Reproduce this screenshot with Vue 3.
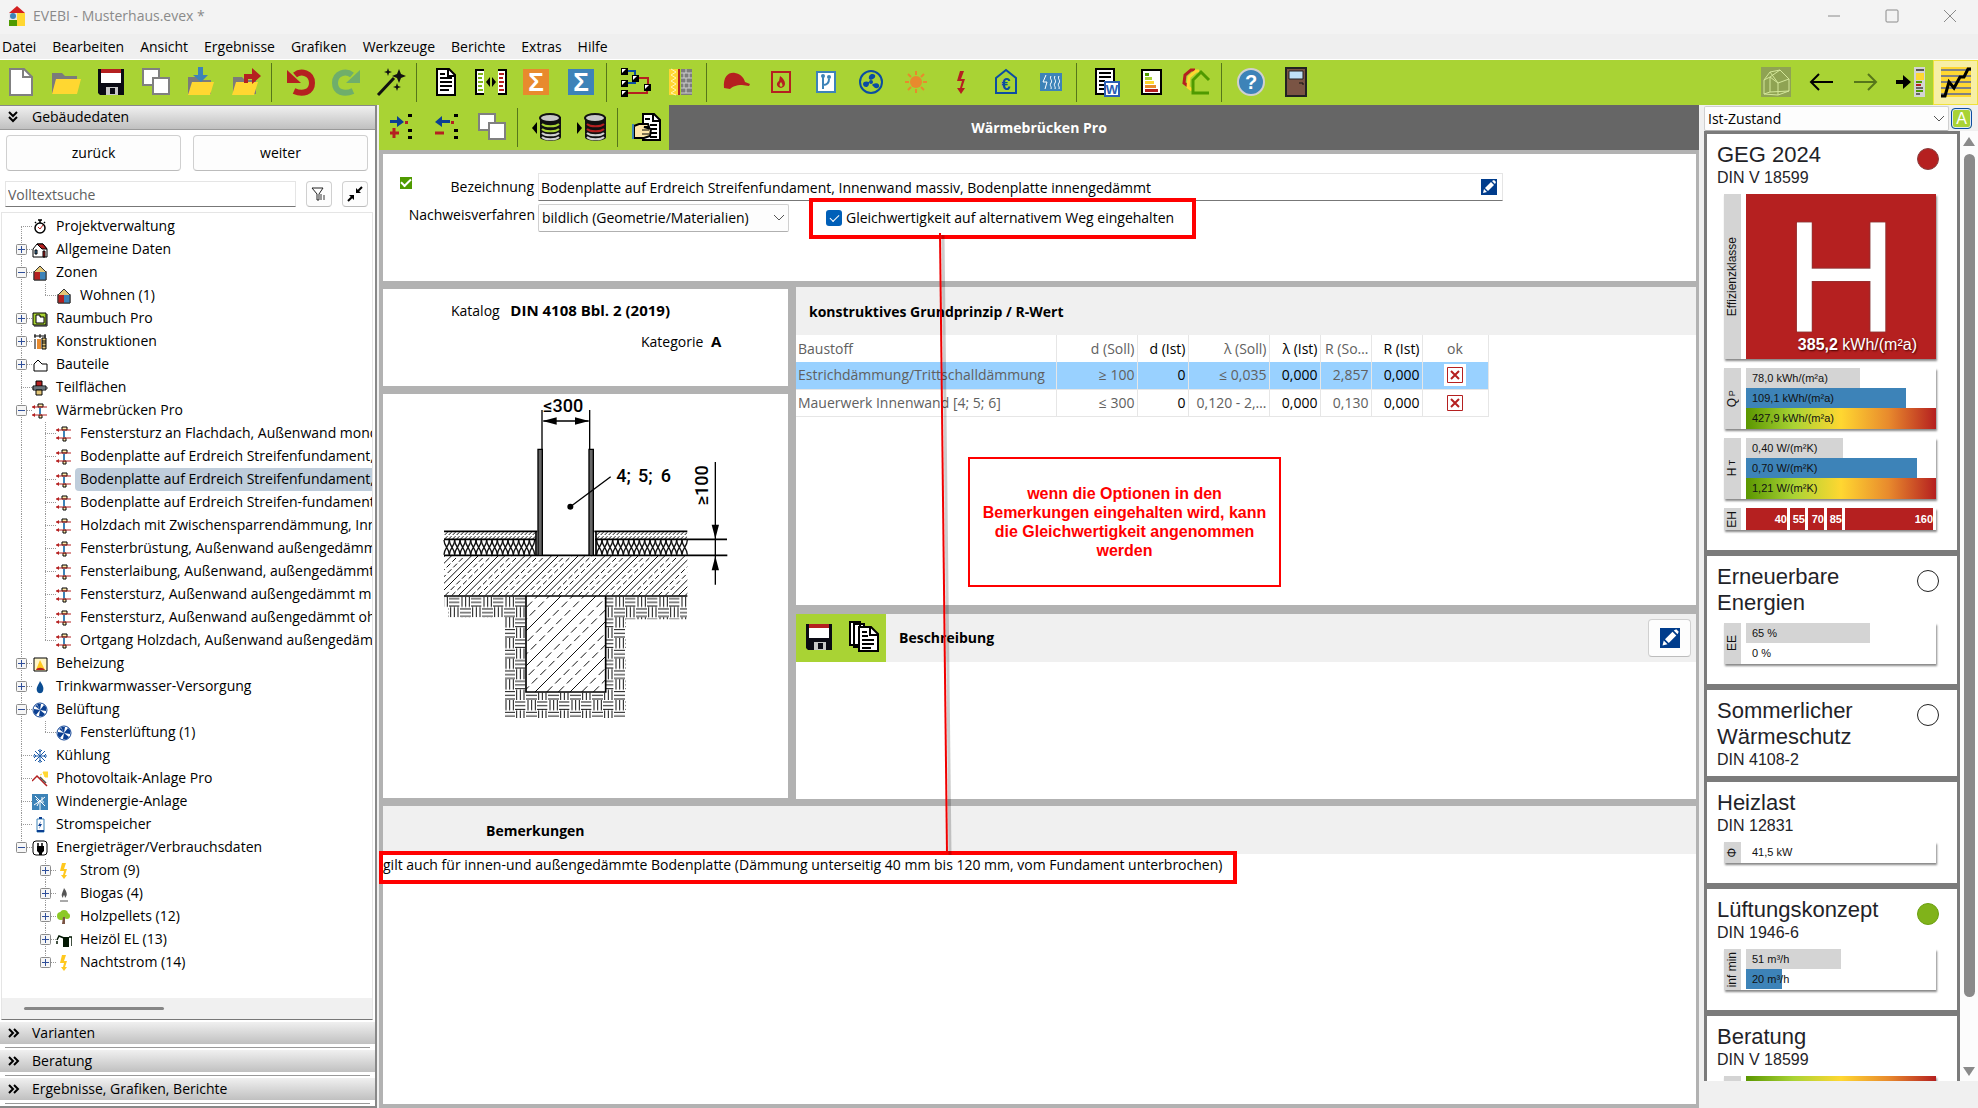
<script setup>
import { ref } from 'vue'

const menus = ['Datei', 'Bearbeiten', 'Ansicht', 'Ergebnisse', 'Grafiken', 'Werkzeuge', 'Berichte', 'Extras', 'Hilfe']

// 32 x 32 toolbar symbols
const icons = {
  neu: '<path d="M5 3h14l8 8v18H5z" fill="#fff" stroke="#808080" stroke-width="2"/><path d="M18 3v8h8" fill="none" stroke="#808080" stroke-width="2"/>',
  oeffnen: '<path d="M2 7h10l3 3h12v18H2z" fill="#7b7b7b"/><path d="M6 13h25l-4 15H2z" fill="#ffd731"/>',
  speichern: '<path d="M3 3h26v26H5l-2-2z" fill="#0a0a14"/><path d="M6 3h20v4H6z" fill="#b52020"/><path d="M6 7h20v10H6z" fill="#fff"/><path d="M11 21h12v8H11z" fill="#c8c8c8"/><path d="M15 22h5v6h-5z" fill="#0a0a14"/>',
  kopie: '<path d="M3 3h16v16H3z" fill="#fff" stroke="#808080" stroke-width="2"/><path d="M13 12h16v16H13z" fill="#fff" stroke="#808080" stroke-width="2"/>',
  import: '<path d="M3 11h9l3 3h11v14H3z" fill="#7b7b7b"/><path d="M7 16h22l-4 13H3z" fill="#ffd731"/><path d="M13 1h5v8h5l-7 7-8-7h5z" fill="#3d83b8"/>',
  export: '<path d="M3 11h9l3 3h11v14H3z" fill="#7b7b7b"/><path d="M6 16h22l-4 13H2z" fill="#ffd731"/><path d="M14 17V8h8V2l9 8-9 8v-5h-4v4z" fill="#b52020"/>',
  undo: '<path d="M10 9c6-5 17-2 17 8 0 9-9 12-18 8" fill="none" stroke="#b52020" stroke-width="6"/><path d="M2 4v13h14z" fill="#b52020"/>',
  redo: '<path d="M22 9C16 4 5 7 5 17c0 9 9 12 18 8" fill="none" stroke="#6fae6b" stroke-width="6"/><path d="M30 4v13H16z" fill="#6fae6b"/>',
  zauber: '<path d="M3 29L19 12" stroke="#111" stroke-width="3"/><path d="M13 2l1 3 3 1-3 1-1 3-1-3-3-1 3-1zM24 3l2 5 5 2-5 2-2 5-2-5-5-2 5-2zM22 17l1 3 3 1-3 1-1 3-1-3-3-1 3-1z" fill="#111"/>',
  text: '<path d="M7 3h12l6 6v20H7z" fill="#fff" stroke="#000" stroke-width="2"/><path d="M18 3v7h7M10 8h5M10 12h12M10 16h12M10 20h12M10 24h9" fill="none" stroke="#000" stroke-width="2"/>',
  vergleich: '<path d="M1 3h8v26H1z" fill="#fff"/><path d="M1 3v26M2 4h7M2 28h7" stroke="#000" stroke-width="2"/><path d="M3 8h5M3 12h4M3 16h5M3 20h4M3 24h5" stroke="#7fb51b" stroke-width="2"/><path d="M23 3h8v26h-8z" fill="#fff"/><path d="M31 3v26M23 4h7M23 28h7" stroke="#000" stroke-width="2"/><path d="M24 8h5M24 12h4M24 16h5M24 20h4M24 24h5" stroke="#b52020" stroke-width="2"/><path d="M11 16l4-5v10zM21 16l-4-5v10z" fill="#000"/>',
  summe1: '<path d="M3 3h26v26H3z" fill="#e88a2d"/><text x="16" y="25" text-anchor="middle" font-family="Liberation Sans" font-weight="bold" font-size="26" fill="#fff">Σ</text>',
  summe2: '<path d="M3 3h26v26H3z" fill="#3d83b8"/><text x="16" y="25" text-anchor="middle" font-family="Liberation Sans" font-weight="bold" font-size="26" fill="#fff">Σ</text>',
  schema: '<path d="M6 5h9v6M6 17h9v-6M15 11h2" fill="none" stroke="#0b4da2" stroke-width="2"/><path d="M18 12h10v8M6 27h21v-5" fill="none" stroke="#b52020" stroke-width="2"/><path d="M1 2h7v7H1zM12 9h7v7h-7zM1 14h7v7H1zM24 18h7v7h-7zM1 24h7v7H1z" fill="#000"/><path d="M2 3h4l-4 4zM13 10h4l-4 4zM2 15h4l-4 4zM25 19h4l-4 4zM2 25h4l-4 4z" fill="#fff"/>',
  wand: '<path d="M4 3h9v26H4z" fill="#ffd731"/><path d="M6 3l5 3-5 3 5 3-5 3 5 3-5 3 5 3-5 3 5 2" fill="none" stroke="#fff6b0"/><path d="M14 3v26" stroke="#b52020" stroke-width="2"/><path d="M16 3h11v26H16z" fill="#7d7d7d"/><path d="M16 7h11M16 12h11M16 17h11M16 22h11M16 27h11M21 3v4M24 7v5M19 7v5M21 12v5M24 17v5M19 17v5M21 22v5" stroke="#cfcfcf"/>',
  kappe: '<path d="M4 22C3 10 9 6 15 7c6 1 9 5 10 9l5 2-1 2-7-1c-6 0-10 2-12 4z" fill="#b52020"/>',
  flamme: '<path d="M7 6h18v20H7z" fill="none" stroke="#b52020" stroke-width="2"/><path d="M15 10c6 4 7 11 1 12-5-1-5-5-2-7z" fill="#b52020"/><path d="M16 16c2 3 2 4 0 5-2-1-2-3 0-5z" fill="#a9d334"/>',
  wasser: '<path d="M7 6h18v20H7z" fill="#fff" stroke="#3d83b8" stroke-width="2"/><path d="M13 10v13M13 19c5 0 6-3 6-6" fill="none" stroke="#3d83b8" stroke-width="2"/><circle cx="13" cy="10" r="2" fill="#3d83b8"/><circle cx="19" cy="11" r="2" fill="#3d83b8"/>',
  luefter: '<circle cx="16" cy="16" r="11" fill="none" stroke="#0b4da2" stroke-width="2"/><circle cx="16" cy="16" r="2" fill="#0b4da2"/><path d="M14 13c-1-5 4-6 6-4 1 3-2 4-4 5zM18 18c5-2 7 1 6 3-3 3-5 0-7-2zM14 18c-1 5-6 3-6 0 0-3 4-3 6-2z" fill="#0b4da2"/>',
  sonne: '<circle cx="16" cy="16" r="6" fill="#e88a2d"/><path d="M16 5v4M16 23v4M5 16h4M23 16h4M8 8l3 3M21 21l3 3M8 24l3-3M21 11l3-3" stroke="#e88a2d" stroke-width="2"/>',
  blitz: '<path d="M15 5h4l-3 8h4l-3 9h3l-4 6-4-6h3l2-7h-5z" fill="#b52020"/>',
  euro: '<path d="M6 27V12l10-8 10 8v15z" fill="none" stroke="#0b4da2" stroke-width="2"/><text x="16" y="24" text-anchor="middle" font-family="Liberation Sans" font-weight="bold" font-size="16" fill="#0b4da2">€</text>',
  heizkoerper: '<path d="M5 7h22v18H5z" fill="#3d83b8"/><path d="M11 9l-3 7h4l-2 7M16 10c-2 3 2 4 0 7s1 3 0 6M20 10c-2 3 2 4 0 7s1 3 0 6M24 10c-2 3 2 4 0 7s1 3 0 6" fill="none" stroke="#fff"/>',
  word: '<path d="M6 3h18v25H6z" fill="#fff" stroke="#000" stroke-width="2"/><path d="M9 7h12M9 11h12M9 15h6M9 19h6M9 23h6" stroke="#000" stroke-width="2"/><path d="M15 16h14v14H15z" fill="#fff" stroke="#2b5fb4" stroke-width="2"/><text x="22" y="28" text-anchor="middle" font-family="Liberation Sans" font-weight="bold" font-size="13" fill="#2b5fb4">W</text>',
  ausweis: '<path d="M7 4h19v24H7z" fill="#fff" stroke="#000" stroke-width="2"/><path d="M10 7h4v3h-4z" fill="#4f9a00"/><path d="M10 11h7v3h-7z" fill="#a9d334"/><path d="M10 15h9v3h-9z" fill="#ffd731"/><path d="M10 19h11v3H10z" fill="#e88a2d"/><path d="M10 23h13v3H10z" fill="#b52020"/>',
  haeuser: '<path d="M8 20l-4-3 1-8 6-5h4" fill="none" stroke="#b52020" stroke-width="3"/><path d="M12 24l-4-3 1-10 7-6h3" fill="none" stroke="#ffd731" stroke-width="3"/><path d="M29 27H13V14l8-8 8 8" fill="none" stroke="#4f9a00" stroke-width="3"/>',
  hilfe: '<circle cx="16" cy="16" r="13" fill="#3d83b8" stroke="#d0d0d0" stroke-width="2"/><text x="16" y="23" text-anchor="middle" font-family="Liberation Sans" font-weight="bold" font-size="20" fill="#fff">?</text>',
  tuer: '<path d="M6 2h20v28H6z" fill="#7a5444" stroke="#222" stroke-width="2"/><path d="M9 5h14v8H9z" fill="#bfe0f5" stroke="#222"/><path d="M19 17h4v2" fill="none" stroke="#111"/>',
  haus3d: '<path d="M1 1h30v30H1z" fill="#8fa353"/><path d="M4 28V14l6-8 10-2 9 9v12l-11 4zM4 14l6-3 8 6v12M18 17l11-4M10 11l10-7M10 11v15l-6 2M10 26l19-1M10 6l8 11" fill="none" stroke="#d4e79a"/>',
  links: '<path d="M28 16H6M14 8l-8 8 8 8" fill="none" stroke="#000" stroke-width="2"/>',
  rechts: '<path d="M4 16h22M18 8l8 8-8 8" fill="none" stroke="#56761a" stroke-width="2"/>',
  bericht: '<path d="M1 14h7v-5l8 7-8 7v-5H1z" fill="#000"/><path d="M19 1h11v30H19z" fill="#d4d4d4"/><path d="M21 4h8" stroke="#555" stroke-width="2"/><path d="M21 7h8v7h-8z" fill="#ffd731"/><path d="M21 16h6M21 25h7" stroke="#4f9a00" stroke-width="2"/><path d="M21 19h5" stroke="#b52020" stroke-width="2"/><path d="M21 22h7M21 28h4" stroke="#666" stroke-width="2"/>',
  kurve: '<path d="M1 1h30v30H1z" fill="#ffd731"/><path d="M1 4h30M1 10h30M1 16h30M1 22h30M1 28h30" stroke="#808080" stroke-width="2"/><path d="M1 30h4l4-14 5 6 6-11h4l4-8h3" fill="none" stroke="#000" stroke-width="3"/>',
  plus: '<path d="M4 9h7V5l7 6-7 5v-4H4z" fill="#0b3f92"/><path d="M4 22h9M8 17v10" stroke="#b52020" stroke-width="3"/><path d="M22 3h4v3h-4zM22 18h4v3h-4zM22 25h4v3h-4z" fill="#000"/><path d="M19 10h3v3h-3z" fill="#b52020"/>',
  minus: '<path d="M19 9h-8V5l-7 6 7 5v-4h8z" fill="#0b3f92"/><path d="M4 22h9" stroke="#b52020" stroke-width="3"/><path d="M23 3h4v3h-4zM23 18h4v3h-4zM23 25h4v3h-4z" fill="#000"/><path d="M20 10h3v3h-3z" fill="#b52020"/>',
  dbAus: '<path d="M9 6v20c0 5 21 5 21 0V6" fill="#111"/><ellipse cx="19" cy="7" rx="10" ry="4" fill="#c8c8c8" stroke="#111" stroke-width="2"/><path d="M11 13c3 3 14 3 17 0M11 18c3 3 14 3 17 0" fill="none" stroke="#a9d334" stroke-width="2"/><path d="M11 22c3 3 14 3 17 0M11 26c3 3 14 3 17 0" fill="none" stroke="#d0d0d0" stroke-width="2"/><path d="M6 11v12l-5-6z" fill="#000"/>',
  dbEin: '<path d="M9 6v20c0 5 21 5 21 0V6" fill="#111"/><ellipse cx="19" cy="7" rx="10" ry="4" fill="#c8c8c8" stroke="#111" stroke-width="2"/><path d="M11 13c3 3 14 3 17 0M11 18c3 3 14 3 17 0" fill="none" stroke="#b52020" stroke-width="2"/><path d="M11 22c3 3 14 3 17 0M11 26c3 3 14 3 17 0" fill="none" stroke="#d0d0d0" stroke-width="2"/><path d="M1 11v12l5-6z" fill="#000"/>',
  hand: '<path d="M12 3h11l6 6v20H12z" fill="#fff" stroke="#000" stroke-width="2"/><path d="M22 3v7h7M14 8h5M19 14h7M19 18h7M19 22h7M19 26h7" fill="none" stroke="#000" stroke-width="2"/><path d="M3 15l5-2h9l1 3h-5l7 2-1 7-6 2H3z" fill="#ffe6a8" stroke="#000" stroke-width="2"/><path d="M11 19h7M11 23h7" stroke="#000"/><path d="M1 13h2v15H1z" fill="#3d83b8"/>',
  blaetter: '<path d="M2 1h10v23H2zM6 3h10v23H6z" fill="#fff" stroke="#000" stroke-width="2"/><path d="M11 6h12l7 7v17H11z" fill="#fff" stroke="#000" stroke-width="2"/><path d="M22 6v8h8M14 11h5M14 15h6M14 19h12M14 23h12M14 27h9" fill="none" stroke="#000" stroke-width="2"/>',
}

const toolbar = [
  [['neu', 'Neu'], ['oeffnen', 'Öffnen'], ['speichern', 'Speichern'], ['kopie', 'Kopieren'], ['import', 'Importieren'], ['export', 'Exportieren']],
  [['undo', 'Rückgängig'], ['redo', 'Wiederholen'], ['zauber', 'Assistent']],
  [['text', 'Protokoll'], ['vergleich', 'Vergleich'], ['summe1', 'Summe'], ['summe2', 'Bilanz']],
  [['schema', 'Schema'], ['wand', 'Wandaufbau']],
  [['kappe', 'Beratung'], ['flamme', 'Heizung'], ['wasser', 'Trinkwasser'], ['luefter', 'Lüftung'], ['sonne', 'Solar'], ['blitz', 'Strom'], ['euro', 'Kosten'], ['heizkoerper', 'Heizlast']],
  [['word', 'Word-Bericht'], ['ausweis', 'Energieausweis'], ['haeuser', 'Sanierungsfahrplan']],
  [['hilfe', 'Hilfe'], ['tuer', 'Beenden']],
]
const toolbarRight = [['haus3d', '3D-Ansicht'], ['links', 'Zurück'], ['rechts', 'Vorwärts'], ['bericht', 'Berichtsleiste']]
const subbar = [
  [['plus', 'Hinzufügen'], ['minus', 'Entfernen'], ['kopie', 'Duplizieren']],
  [['dbAus', 'Aus Datenbank'], ['dbEin', 'In Datenbank']],
  [['hand', 'Übernehmen']],
]

// 16 x 16 tree symbols
const small = {
  uhr: '<circle cx="8" cy="9" r="5" fill="#fff" stroke="#000" stroke-width="1.5"/><path d="M6 1h4M8 1v3M12 4l1-1M4 4L3 3" stroke="#000" stroke-width="1.5"/><path d="M6 8l2 2 3-4" fill="none" stroke="#b52020"/>',
  haus: '<path d="M1 7l4-5h6l4 5v8H1z" fill="#fff" stroke="#000"/><path d="M5 2h6l4 5h-5z" fill="#b52020" stroke="#000"/><path d="M3 8h2v4H3z" fill="#3d83b8" stroke="#000"/><path d="M11 9h2v6h-2z" fill="#b52020" stroke="#000"/>',
  zone: '<path d="M2 7l6-6 6 6v8H2z" fill="#e3c678" stroke="#333"/><path d="M2 7h6v8H2z" fill="#b52020"/><path d="M8 7h6v8H8z" fill="#3d83b8"/><path d="M2 6v9h12V6" fill="none" stroke="#333"/>',
  raum: '<path d="M1 2h13v12H1z" fill="#a9d334" stroke="#000"/><path d="M4 4h4v2h4v6H4z" fill="#fff" stroke="#000"/><path d="M15 3v12H2" fill="none" stroke="#000"/>',
  konstr: '<path d="M2 2h12M3 0v4M8 0v4M13 0v4M3 5v10" stroke="#000"/><path d="M5 5h4v10H5z" fill="#e88a2d"/><path d="M10 4h4v11h-4z" fill="#e3c678" stroke="#000"/><path d="M10 7h4M10 9h4M10 12h4" stroke="#000"/>',
  bauteil: '<path d="M2 14V7l4-4 4 4h5v7z" fill="#fff" stroke="#000"/>',
  teil: '<path d="M4 1h6v6H4z" fill="#b52020" stroke="#000"/><path d="M1 6h13v4H1z" fill="#9fb3c0" stroke="#000"/><path d="M4 10h6v5H4z" fill="#e3c678" stroke="#000"/><path d="M0 8h16" stroke="#333"/>',
  wb: '<path d="M6 1h5v3H6zM7 12h3v3H7z" fill="#ffe9a8" stroke="#000"/><path d="M8 5v6" stroke="#3d83b8" stroke-width="2"/><path d="M0 4h15M0 12h15" stroke="#b52020"/><path d="M0 4l3-2v4zM0 12l3-2v4z" fill="#b52020"/>',
  feuer: '<path d="M2 2h13v13H2z" fill="#fff6c8" stroke="#000"/><path d="M8 4l5 10H4z" fill="#ffc81e"/><path d="M4 14c1-3 7-3 9 0z" fill="#b52020"/>',
  tropfen: '<path d="M8 2c3 5 4 6 3 10-1 3-5 3-6 0-1-4 1-5 3-10z" fill="#0b4d92"/>',
  fan: '<circle cx="8" cy="8" r="7" fill="#fff" stroke="#0b3f92"/><path d="M8 8L5 2h4zM8 8l6-3v4zM8 8l3 6H7zM8 8l-6 3V7zM8 8l4-5 2 2zM8 8l5 4-2 2zM8 8l-4 5-2-2zM8 8L3 4l2-1z" fill="#0b3f92"/>',
  frost: '<path d="M8 1v14M1 8h14M3 3l10 10M13 3L3 13M6 2l2 2 2-2M6 14l2-2 2 2M2 6l2 2-2 2M14 6l-2 2 2 2" fill="none" stroke="#1d5ba8"/>',
  pv: '<path d="M0 10l5-5 10 10" fill="none" stroke="#b52020" stroke-width="1.5"/><path d="M8 6l6 6" stroke="#555" stroke-width="1.5"/><path d="M11 1h5v5h-3zM8 4l2-1M11 8l1 1" fill="#ffd731" stroke="#ffd731"/>',
  wind: '<path d="M0 0h16v16H0z" fill="#3d83b8"/><path d="M8 7L3 2M8 7l5-4M8 7l-6 4M8 7l5 5M8 7v9M4 5l3 3M10 3v4M5 12l2-4M12 8H9" stroke="#fff" fill="none"/>',
  akku: '<path d="M5 2h7v13H5z" fill="#fff" stroke="#3d83b8"/><path d="M7 1h3M5 14h7" stroke="#0b3f92" stroke-width="2"/><path d="M9 4L6 9h2l-1 3 3-5H8z" fill="#0b3f92"/>',
  stecker: '<rect x="1" y="1" width="14" height="14" rx="3" fill="#fff" stroke="#000"/><path d="M6 3v3M10 3v3" stroke="#000" stroke-width="1.5"/><path d="M5 6h7v5l-2 2v2H7v-2l-2-2z" fill="#000"/>',
  strom: '<path d="M6 0h4L8 6h3l-2 6h2l-3 4-3-4h2l1-4H4z" fill="#ffc81e"/>',
  gas: '<path d="M8 2c3 4 4 7 1 10 0-2-1-3-1-3s-1 1-1 3C4 9 7 6 8 2z" fill="#555"/><path d="M4 15h8" stroke="#555"/>',
  baum: '<circle cx="8" cy="5" r="4" fill="#8cc926"/><circle cx="5" cy="7" r="4" fill="#8cc926"/><circle cx="11" cy="7" r="3" fill="#8cc926"/><path d="M7 8h2v7H6z" fill="#7a5444"/>',
  oel: '<path d="M7 5h6v10H7z" fill="#041804"/><path d="M8 6L3 4 1 8M1 9v3M13 5h3v9" fill="none" stroke="#041804" stroke-width="1.5"/>',
}

const wb = (label, more = {}) => ({ level: 2, icon: 'wb', label, trunk: true, ...more })
const tree = [
  { level: 1, icon: 'uhr', label: 'Projektverwaltung', first: true },
  { level: 1, icon: 'haus', label: 'Allgemeine Daten', exp: '+' },
  { level: 1, icon: 'zone', label: 'Zonen', exp: '-' },
  { level: 2, icon: 'zone', label: 'Wohnen (1)', trunk: true, last: true },
  { level: 1, icon: 'raum', label: 'Raumbuch Pro', exp: '+' },
  { level: 1, icon: 'konstr', label: 'Konstruktionen', exp: '+' },
  { level: 1, icon: 'bauteil', label: 'Bauteile', exp: '+' },
  { level: 1, icon: 'teil', label: 'Teilflächen' },
  { level: 1, icon: 'wb', label: 'Wärmebrücken Pro', exp: '-' },
  wb('Fenstersturz an Flachdach, Außenwand monolithisch'),
  wb('Bodenplatte auf Erdreich Streifenfundament, Außenwand'),
  wb('Bodenplatte auf Erdreich Streifenfundament, Innenwand', { selected: true }),
  wb('Bodenplatte auf Erdreich Streifen-fundament, Innenwand'),
  wb('Holzdach mit Zwischensparrendämmung, Innenwand'),
  wb('Fensterbrüstung, Außenwand außengedämmt'),
  wb('Fensterlaibung, Außenwand, außengedämmt'),
  wb('Fenstersturz, Außenwand außengedämmt mit Rollladen'),
  wb('Fenstersturz, Außenwand außengedämmt ohne Rollladen'),
  wb('Ortgang Holzdach, Außenwand außengedämmt', { last: true }),
  { level: 1, icon: 'feuer', label: 'Beheizung', exp: '+' },
  { level: 1, icon: 'tropfen', label: 'Trinkwarmwasser-Versorgung', exp: '+' },
  { level: 1, icon: 'fan', label: 'Belüftung', exp: '-' },
  { level: 2, icon: 'fan', label: 'Fensterlüftung (1)', trunk: true, last: true },
  { level: 1, icon: 'frost', label: 'Kühlung' },
  { level: 1, icon: 'pv', label: 'Photovoltaik-Anlage Pro' },
  { level: 1, icon: 'wind', label: 'Windenergie-Anlage' },
  { level: 1, icon: 'akku', label: 'Stromspeicher' },
  { level: 1, icon: 'stecker', label: 'Energieträger/Verbrauchsdaten', exp: '-', last: true },
  { level: 2, icon: 'strom', label: 'Strom (9)', exp: '+' },
  { level: 2, icon: 'gas', label: 'Biogas (4)', exp: '+' },
  { level: 2, icon: 'baum', label: 'Holzpellets (12)', exp: '+' },
  { level: 2, icon: 'oel', label: 'Heizöl EL (13)', exp: '+' },
  { level: 2, icon: 'strom', label: 'Nachtstrom (14)', exp: '+', last: true },
]
// dotted guide lines in front of a tree row
function guide(n) {
  const x = n.level === 1 ? 19 : 43
  let d = n.trunk ? 'M19.5 0V23' : ''
  d += `M${x}.5 ${n.first ? 12 : 0}V${n.last ? 12 : 23}M${x} 11.5h11`
  return d
}

const sections = ['Varianten', 'Beratung', 'Ergebnisse, Grafiken, Berichte']

const rows = [
  ['Estrichdämmung/Trittschalldämmung', '≥ 100', '0', '≤ 0,035', '0,000', '2,857', '0,000'],
  ['Mauerwerk Innenwand [4; 5; 6]', '≤ 300', '0', '0,120 - 2,…', '0,000', '0,130', '0,000'],
]
const heads = ['Baustoff', 'd (Soll)', 'd (Ist)', 'λ (Soll)', 'λ (Ist)', 'R (So…', 'R (Ist)', 'ok']

const bezeichnung = ref('Bodenplatte auf Erdreich Streifenfundament, Innenwand massiv, Bodenplatte innengedämmt')
const aktiv = ref(true)
const gleichwertig = ref(true)
const suche = ref('')

const cards = [
  {
    title: 'GEG 2024', norm: 'DIN V 18599', lamp: 'red', klasse: true,
    charts: [
      { label: 'Q', sub: 'P', bars: [['78,0 kWh/(m²a)', 60, 'gray'], ['109,1 kWh/(m²a)', 84, 'blue'], ['427,9 kWh/(m²a)', 100, 'scale']] },
      { label: 'H', sub: 'T', bars: [['0,40 W/(m²K)', 51, 'gray'], ['0,70 W/(m²K)', 90, 'blue'], ['1,21 W/(m²K)', 100, 'scale']] },
      { label: 'EH', steps: [['40', 41], ['55', 15], ['70', 16], ['85', 15], ['160', 88]] },
    ],
  },
  { title: 'Erneuerbare Energien', lamp: 'empty', charts: [{ label: 'EE', bars: [['65 %', 65, 'gray'], ['0 %', 0, 'gray']] }] },
  { title: 'Sommerlicher Wärmeschutz', norm: 'DIN 4108-2', lamp: 'empty', charts: [] },
  { title: 'Heizlast', norm: 'DIN 12831', charts: [{ label: 'Φ', bars: [['41,5 kW', 0, 'gray']] }] },
  { title: 'Lüftungskonzept', norm: 'DIN 1946-6', lamp: 'green', charts: [{ label: 'inf min', bars: [['51 m³/h', 50, 'gray'], ['20 m³/h', 19, 'blue']] }] },
  { title: 'Beratung', norm: 'DIN V 18599', charts: [{ label: 'Q', sub: 'P', bars: [['', 100, 'scale'], ['', 0, 'gray'], ['', 0, 'gray']] }] },
]

// hatching: solid strokes alternate with dashed ones
const range = (a, b, s) => Array.from({ length: Math.ceil((b - a) / s) }, (_, i) => a + i * s)
const slab = range(75, 930, 20).map((x, i) => ({ x, dash: i % 4 > 1 }))
const footing = range(150, 700, 35).map((x, i) => ({ x, dash: i % 3 > 0 }))
const screed = range(170, 930, 12)
const leavesL = range(192, 460, 16)
const leavesR = range(650, 912, 16)
</script>

<template>
  <div class="app">
    <header class="titlebar">
      <svg class="logo" width="18" height="22" viewBox="0 0 18 22" aria-hidden="true">
        <path d="M1 8l8-7 8 7z" fill="#d32020" /><path d="M9 8h8v13H9z" fill="#ffd731" /><path d="M1 8h8v13H1z" fill="#e8e8e8" />
        <circle cx="5" cy="11" r="3" fill="#3d83b8" /><path d="M1 15h8v6H1z" fill="#4f9a00" />
      </svg>
      <span>EVEBI - Musterhaus.evex *</span>
      <div class="winbtns">
        <button aria-label="Minimieren"><svg width="14" height="14"><path d="M1 7h12" /></svg></button>
        <button aria-label="Maximieren"><svg width="14" height="14"><rect x="1" y="1" width="12" height="12" rx="1" /></svg></button>
        <button aria-label="Schließen"><svg width="14" height="14"><path d="M1 1l12 12M13 1L1 13" /></svg></button>
      </div>
    </header>

    <nav class="menubar"><button v-for="m in menus" :key="m">{{ m }}</button></nav>

    <div class="toolbar">
      <div v-for="(g, i) in toolbar" :key="i" class="group">
        <button v-for="t in g" :key="t[0]" class="tool" :aria-label="t[1]"><svg width="32" height="32" viewBox="0 0 32 32" v-html="icons[t[0]]"></svg></button>
      </div>
      <div class="right">
        <button v-for="t in toolbarRight" :key="t[0]" class="tool" :aria-label="t[1]"><svg width="32" height="32" viewBox="0 0 32 32" v-html="icons[t[0]]"></svg></button>
        <button class="tool active" aria-label="Kennwerte"><svg width="32" height="32" viewBox="0 0 32 32" v-html="icons.kurve"></svg></button>
      </div>
    </div>

    <div class="body">
      <aside class="side">
        <button class="head">
          <svg width="12" height="12" viewBox="0 0 12 12"><path d="M1 1l4 4 4-4M1 6l4 4 4-4" fill="none" stroke="#000" stroke-width="2" /></svg>Gebäudedaten
        </button>
        <div class="nav"><button class="btn">zurück</button><button class="btn">weiter</button></div>
        <div class="search">
          <input v-model="suche" type="text" placeholder="Volltextsuche" aria-label="Volltextsuche">
          <button class="btn" aria-label="Filter"><svg width="16" height="16" viewBox="0 0 16 16"><path d="M1 2h11L8 8v6H6V8z" fill="#fff" stroke="#222" /><path d="M8 8h3v6H8zM12 9h2v5h-2z" fill="#999" /></svg></button>
          <button class="btn" aria-label="Einklappen"><svg width="16" height="16" viewBox="0 0 16 16"><path d="M15 1l-4 4M1 15l4-4" stroke="#000" stroke-width="2" /><path d="M9 2v5h5zM2 9h5v5z" fill="#000" /></svg></button>
        </div>
        <div class="tree">
          <ul>
            <li v-for="n in tree" :key="n.label + n.level">
              <svg :width="n.level === 1 ? 30 : 54" height="23">
                <path :d="guide(n)" fill="none" stroke="#999" stroke-dasharray="1 1" />
                <g v-if="n.exp">
                  <rect :x="n.level === 1 ? 14.5 : 38.5" y="6.5" width="10" height="10" rx="1" fill="#f6f6f6" stroke="#8c8c8c" />
                  <path :d="n.level === 1 ? 'M16 11.5h7' : 'M40 11.5h7'" stroke="#2f4f9a" />
                  <path v-if="n.exp === '+'" :d="n.level === 1 ? 'M19.5 8v7' : 'M43.5 8v7'" stroke="#2f4f9a" />
                </g>
              </svg>
              <svg width="16" height="16" viewBox="0 0 16 16" class="ico" v-html="small[n.icon]"></svg>
              <span class="name" :class="{ selected: n.selected }">{{ n.label }}</span>
            </li>
          </ul>
          <div class="hscroll"><div></div></div>
        </div>
        <div v-for="s in sections" :key="s" class="section">
          <button class="head">
            <svg width="12" height="12" viewBox="0 0 12 12"><path d="M1 2l4 4-4 4M6 2l4 4-4 4" fill="none" stroke="#000" stroke-width="2" /></svg>{{ s }}
          </button>
        </div>
      </aside>

      <main class="main">
        <div class="subbar">
          <div v-for="(g, i) in subbar" :key="i" class="group">
            <button v-for="t in g" :key="t[0]" class="tool" :aria-label="t[1]"><svg width="32" height="32" viewBox="0 0 32 32" v-html="icons[t[0]]"></svg></button>
          </div>
          <h1>Wärmebrücken Pro</h1>
        </div>

        <div class="panels">
          <section class="form panel">
            <input v-model="aktiv" type="checkbox" class="small" aria-label="Aktiv">
            <label for="bez">Bezeichnung</label>
            <div class="field">
              <input id="bez" v-model="bezeichnung" type="text">
              <svg width="16" height="16" viewBox="0 0 16 16"><path d="M0 0h16v16H0z" fill="#003c8c" /><path d="M4 9l6-6 3 3-6 6z" fill="#fff" /><path d="M11 2l2-1 2 2-1 2zM3 10l3 3-4 1z" fill="#fff" /></svg>
            </div>
            <label for="nach" class="second">Nachweisverfahren</label>
            <div class="line2">
              <div class="select">
                <select id="nach"><option>bildlich (Geometrie/Materialien)</option></select>
                <svg width="12" height="8" viewBox="0 0 12 8"><path d="M1 1l5 5 5-5" fill="none" stroke="#555" /></svg>
              </div>
              <label class="check"><input v-model="gleichwertig" type="checkbox">Gleichwertigkeit auf alternativem Weg eingehalten</label>
            </div>
          </section>

          <div class="middle">
            <div class="left">
              <section class="panel katalog">
                <p>Katalog <b>DIN 4108 Bbl. 2 (2019)</b></p>
                <p class="kat">Kategorie <b>A</b></p>
              </section>
              <section class="panel detail">
                <svg viewBox="9 42 1215 1212" role="img" aria-label="Bodenplatte mit Streifenfundament">
                  <defs>
                    <pattern id="erde" x="207" y="650" width="66" height="62" patternUnits="userSpaceOnUse">
                      <path d="M0 6h31M0 17h31M0 28h31M33 37h33M33 48h33M33 59h33M39 0v31M50 0v31M61 0v31M5 31v31M16 31v31M27 31v31" stroke="#111" stroke-width="3" />
                    </pattern>
                    <clipPath id="cSlab"><path d="M192 526h730v121H192z" /></clipPath>
                    <clipPath id="cFoot"><path d="M438 647h239v289H438z" /></clipPath>
                    <clipPath id="cScreed"><path d="M192 455h278v22H192zM645 455h277v22H645z" /></clipPath>
                  </defs>
                  <path d="M192 650h245v62H205v-30h-13zM375 712h62v226h240V650h244v68H737v296H375z" fill="url(#erde)" />
                  <g clip-path="url(#cSlab)" stroke="#111" stroke-width="3">
                    <path v-for="h in slab" :key="h.x" :d="`M${h.x} 647l121 -121`" :stroke-dasharray="h.dash ? '16 8' : 'none'" />
                  </g>
                  <g clip-path="url(#cFoot)" stroke="#111" stroke-width="3">
                    <path v-for="h in footing" :key="h.x" :d="`M${h.x} 936l289 -289`" :stroke-dasharray="h.dash ? '24 12' : 'none'" />
                  </g>
                  <g clip-path="url(#cScreed)" stroke="#111" stroke-width="3">
                    <path v-for="x in screed" :key="x" :d="`M${x} 477l22 -22`" stroke-dasharray="12 5" />
                  </g>
                  <g fill="none" stroke="#111" stroke-width="4">
                    <path v-for="x in leavesL" :key="x" :d="`M${x} 480c0 20 16 24 16 44M${x + 16} 480c0 20 -16 24 -16 44`" />
                    <path v-for="x in leavesR" :key="x" :d="`M${x} 480c0 20 16 24 16 44M${x + 16} 480c0 20 -16 24 -16 44`" />
                  </g>
                  <path d="M192 454h280M192 478h276M192 526h850M192 648h730M643 454h279M645 478h396M438 648v288h239V648M468 454v72M648 454v72" fill="none" stroke="#000" stroke-width="5" />
                  <path d="M474 208h13v318h-13zM627 208h13v318h-13z" fill="#666" stroke="#000" stroke-width="4" />
                  <path d="M486 90v120M629 90v120M490 123h136M571 380L692 290M1006 246v368" stroke="#000" stroke-width="4" />
                  <circle cx="571" cy="380" r="9" />
                  <path d="M488 123l42-11v22zM627 123l-42-11v22zM1006 476l-11-42h22zM1006 529l-11 42h22z" />
                  <text x="490" y="97">≤300</text>
                  <text x="709" y="305">4;</text>
                  <text x="774" y="305">5;</text>
                  <text x="842" y="305">6</text>
                  <text transform="translate(984 376) rotate(-90)">≥100</text>
                </svg>
              </section>
            </div>

            <div class="rightcol">
              <section class="panel prinzip">
                <h2>konstruktives Grundprinzip / R-Wert</h2>
                <table>
                  <colgroup><col class="c0"><col class="c1"><col class="c2"><col class="c1"><col class="c2"><col class="c2"><col class="c2"><col class="c3"></colgroup>
                  <thead><tr><th v-for="h in heads" :key="h" scope="col">{{ h }}</th></tr></thead>
                  <tbody>
                    <tr v-for="(r, i) in rows" :key="i" :class="{ sel: i === 0 }">
                      <td v-for="(c, j) in r" :key="j">{{ c }}</td>
                      <td>
                        <svg width="22" height="22" viewBox="0 0 22 22" role="img" aria-label="nicht erfüllt"><path d="M0 0h22v22H0z" fill="#fff" /><path d="M3.5 3.5h15v15h-15z" fill="none" stroke="#b52020" /><path d="M7 7l8 8M15 7l-8 8" stroke="#b52020" stroke-width="2" /></svg>
                      </td>
                    </tr>
                  </tbody>
                </table>
              </section>
              <section class="panel beschreibung">
                <div class="bar">
                  <div class="tools">
                    <button class="tool" aria-label="Speichern"><svg width="32" height="32" viewBox="0 0 32 32" v-html="icons.speichern"></svg></button>
                    <button class="tool" aria-label="Kopieren"><svg width="32" height="32" viewBox="0 0 32 32" v-html="icons.blaetter"></svg></button>
                  </div>
                  <h2>Beschreibung</h2>
                  <button class="btn edit" aria-label="Bearbeiten"><svg width="20" height="20" viewBox="0 0 16 16"><path d="M0 0h16v16H0z" fill="#003c8c" /><path d="M4 9l6-6 3 3-6 6z" fill="#fff" /><path d="M11 2l2-1 2 2-1 2zM3 10l3 3-4 1z" fill="#fff" /></svg></button>
                </div>
              </section>
            </div>
          </div>

          <section class="panel bemerkungen">
            <h2>Bemerkungen</h2>
            <p>gilt auch für innen-und außengedämmte Bodenplatte (Dämmung unterseitig 40 mm bis 120 mm, vom Fundament unterbrochen)</p>
          </section>
        </div>

        <div class="mark m1"></div>
        <div class="mark m2"></div>
        <div class="note">wenn die Optionen in den Bemerkungen eingehalten wird, kann die Gleichwertigkeit angenommen werden</div>
        <svg class="link" width="20" height="624" aria-hidden="true">
          <path d="M7 2l7 620" stroke="#000" stroke-opacity=".2" stroke-width="3" />
          <path d="M4 0l7 620" stroke="#f00000" stroke-width="2" />
        </svg>
      </main>

      <aside class="info">
        <div class="pick">
          <div class="select">
            <select aria-label="Variante"><option>Ist-Zustand</option></select>
            <svg width="12" height="8" viewBox="0 0 12 8"><path d="M1 1l5 5 5-5" fill="none" stroke="#555" /></svg>
          </div>
          <button class="abtn">A</button>
        </div>
        <div class="scroller">
          <div class="cards">
            <section v-for="c in cards" :key="c.title" class="card" :class="{ plain: !c.charts.length }">
              <div class="cap">
                <div><h3>{{ c.title }}</h3><p v-if="c.norm">{{ c.norm }}</p></div>
                <span v-if="c.lamp" class="lamp" :class="c.lamp"></span>
              </div>
              <div v-if="c.klasse" class="chart">
                <div class="axis"><span>Effizienzklasse</span></div>
                <div class="box"><span class="big">H</span><span class="val"><b>385,2</b> kWh/(m²a)</span></div>
              </div>
              <div v-for="(ch, i) in c.charts" :key="i" class="chart">
                <div class="axis"><span>{{ ch.label }}<small v-if="ch.sub">{{ ch.sub }}</small></span></div>
                <div v-if="ch.steps" class="steps"><b v-for="s in ch.steps" :key="s[0]" :style="{ flexGrow: s[1] }">{{ s[0] }}</b></div>
                <div v-else class="bars">
                  <div v-for="(b, k) in ch.bars" :key="k" class="row"><i :class="b[2]" :style="{ width: b[1] + '%' }"></i><span>{{ b[0] }}</span></div>
                </div>
              </div>
            </section>
          </div>
          <div class="vscroll">
            <svg width="12" height="9" viewBox="0 0 12 9"><path d="M6 0l6 9H0z" fill="#8a8a8a" /></svg>
            <div class="thumb"></div>
            <svg width="12" height="9" viewBox="0 0 12 9"><path d="M6 9l6-9H0z" fill="#8a8a8a" /></svg>
          </div>
        </div>
      </aside>
    </div>
  </div>
</template>

<style>
body { margin: 0; }
</style>

<style scoped>
* { box-sizing: border-box; }
.app { height: 100vh; min-height: 1000px; display: flex; flex-direction: column; overflow: hidden; background: #f0f0f0; color: #000; font: 14px/20px "Open Sans", "Noto Sans", sans-serif; }
button, input, select { font: inherit; color: inherit; margin: 0; }
button { padding: 0; border: 0; background: none; }
h1, h2, h3, p, ul { margin: 0; padding: 0; }
svg { display: block; flex: none; }

.titlebar { height: 34px; flex: none; display: flex; align-items: center; padding: 0 21px 3px 8px; gap: 7px; background: #f3f3f3; color: #8a8a8a; }
.winbtns { margin-left: auto; display: flex; gap: 44px; }
.winbtns svg { fill: none; stroke: #8a8a8a; }
.menubar { height: 26px; flex: none; display: flex; gap: 16px; padding: 0 2px; background: #efefef; border-bottom: 1px solid #fff; }
.toolbar { height: 45px; flex: none; display: flex; background: #a9d334; }
.toolbar .group:first-child { margin-left: -2px; }
.group { display: flex; background: #a9d334; }
.group + .group { padding-left: 10px; background: linear-gradient(#56761a, #56761a) 3px 3px / 1px 39px no-repeat #a9d334; }
.tool { width: 45px; height: 45px; padding-bottom: 2px; display: flex; align-items: center; justify-content: center; }
.right { margin-left: auto; display: flex; }
.tool.active { background: #f7efa6; border: 1px solid #f0e13c; }

.body { flex: 1; min-height: 0; display: flex; }
.side { width: 377px; flex: none; display: flex; flex-direction: column; background: #fff; border: 1px solid #888; border-width: 1px 2px 2px 0; }
.head { width: 100%; height: 22px; flex: none; display: flex; align-items: center; text-align: left; background: linear-gradient(#f0f0f0, #c0c0c0); }
.head svg { margin: 0 12px 0 8px; }
.side > .head { height: 24px; padding-bottom: 2px; border-bottom: 1px solid #999; }
.btn { border: 1px solid #d0d0d0; border-bottom-color: #bcbcbc; border-radius: 4px; background: #fdfdfd; display: flex; align-items: center; justify-content: center; }
.nav { display: flex; gap: 12px; padding: 5px 7px 0 6px; }
.nav .btn { flex: 1; height: 36px; }
.search { display: flex; padding: 10px 7px 5px 5px; gap: 10px; }
.search input { flex: 1; min-width: 0; height: 26px; padding: 0 2px; border: 1px solid #e5e5e5; border-bottom-color: #777; background: #fff; }
.search input::placeholder { color: #606060; opacity: 1; }
.search .btn { width: 26px; height: 26px; }
.tree { flex: 1; min-height: 0; display: flex; flex-direction: column; margin: 0 2px 2px 1px; border: 1px solid #e5e5e5; border-bottom-color: #777; padding: 2px 0 0; }
.tree ul { flex: 1; min-height: 0; overflow: hidden; list-style: none; }
.tree li { display: flex; height: 23px; align-items: center; overflow: hidden; }
.ico { margin-right: 3px; }
.name { flex: 1 0 auto; height: 23px; line-height: 22px; padding-left: 5px; white-space: nowrap; border-radius: 4px 0 0 4px; }
.name.selected { background: #bfcddb; }
.hscroll { height: 21px; flex: none; background: #f0f0f0; padding: 9px 22px; }
.hscroll div { width: 43%; height: 3px; border-radius: 2px; background: #868686; }
.section { height: 28px; flex: none; background: linear-gradient(#999, #999) 5px 25px / 365px 1px no-repeat; }

.main { flex: 1; min-width: 0; margin-left: 2px; position: relative; display: flex; flex-direction: column; background: #b2b2b2; }
.subbar { height: 45px; flex: none; display: flex; background: #666; }
h1 { flex: 1; padding-right: 290px; text-align: center; color: #fff; font-size: 14px; line-height: 45px; }
h2 { font-size: 14px; line-height: 20px; }
.panels { flex: 1; min-height: 0; display: flex; flex-direction: column; padding: 4px 3px 4px 4px; }
.panel { background: #fff; }
.form { height: 127px; flex: none; display: grid; grid-template-columns: 28px 124px 1fr; grid-template-rows: 31px 28px; padding: 19px 193px 0 0; }
.form > label { text-align: right; padding-right: 1px; line-height: 28px; }
.form > .second { grid-column: 1 / 3; line-height: 22px; padding-right: 0; }
input[type="checkbox"] { appearance: none; flex: none; width: 16px; height: 16px; border-radius: 3px; background: #005fb8; display: grid; place-items: center; }
input[type="checkbox"]::after { content: ""; width: 8px; height: 4px; border: solid #fff; border-width: 0 0 1px 1px; transform: rotate(-45deg) translate(1px, -1px); }
input[type="checkbox"].small { width: 12px; height: 12px; margin: 4px 0 0 17px; border-radius: 0; background: #4f9a00; }
input[type="checkbox"].small::after { border-width: 0 0 2px 2px; }
.field { position: relative; margin-left: 3px; height: 28px; }
.field input { width: 100%; height: 28px; padding: 0 40px 0 2px; border: 1px solid #e5e5e5; border-bottom-color: #777; background: #fff; }
.field svg { position: absolute; right: 6px; top: 6px; }
.line2 { display: flex; margin-left: 3px; gap: 37px; align-items: center; }
.select { position: relative; width: 251px; height: 28px; }
.select select { appearance: none; width: 100%; height: 100%; padding: 0 20px 0 3px; border: 1px solid #d0d0d0; border-bottom-color: #b0b0b0; border-radius: 2px; background: #fdfdfd; }
.select svg { position: absolute; right: 4px; top: 10px; }
.check { display: flex; align-items: center; gap: 4px; white-space: nowrap; }

.middle { display: flex; flex: none; gap: 8px; margin: 6px 0 7px; }
.left { width: 405px; flex: none; display: flex; flex-direction: column; gap: 8px; padding: 2px 0 1px; }
.katalog { height: 97px; padding: 11px 0 0 68px; }
.katalog b { margin-left: 7px; font-size: 15px; }
.katalog .kat { margin-top: 10px; padding-left: 190px; }
.katalog .kat b { margin-left: 4px; }
.detail { height: 404px; }
.detail svg { width: 405px; height: 404px; }
.detail text { font: 500 54px Roboto, sans-serif; }
.rightcol { flex: 1; min-width: 0; display: flex; flex-direction: column; gap: 9px; }
.prinzip { height: 318px; }
.prinzip h2 { height: 48px; padding-left: 13px; line-height: 49px; background: #f0f0f0; }
table { border-collapse: collapse; table-layout: fixed; width: 692px; color: #606060; }
.c0 { width: 260px; } .c1 { width: 81px; } .c2 { width: 51px; } .c3 { width: 66px; }
th, td { height: 27px; padding: 0 2px; font-weight: 400; text-align: right; white-space: nowrap; overflow: hidden; border-right: 1px solid #e6e6e6; border-bottom: 1px solid #e6e6e6; line-height: 20px; }
th { border-bottom: 0; }
th:first-child, td:first-child { text-align: left; }
th:last-child { text-align: center; }
td svg { margin: 0 auto; }
th:nth-child(3), th:nth-child(5), th:nth-child(7), td:nth-child(3), td:nth-child(5), td:nth-child(7) { color: #000; }
.sel td { background: #99d1ff; }
.beschreibung { height: 185px; }
.bar { height: 48px; display: flex; align-items: center; background: #f0f0f0; padding-right: 5px; }
.tools { width: 90px; height: 48px; display: flex; align-items: center; background: #a9d334; }
.bar h2 { flex: 1; padding-left: 13px; }
.edit { width: 43px; height: 38px; }
.bemerkungen { flex: 1; }
.bemerkungen h2 { height: 48px; padding-left: 103px; line-height: 49px; background: #f0f0f0; }
.bemerkungen p { line-height: 22px; white-space: nowrap; }

.mark { position: absolute; border: 4px solid #f00; }
.m1 { left: 430px; top: 93px; width: 387px; height: 41px; }
.m2 { left: 0; top: 746px; width: 858px; height: 33px; }
.link { position: absolute; left: 557px; top: 128px; }
.note { position: absolute; left: 589px; top: 352px; width: 313px; height: 130px; padding: 0 12px; display: flex; align-items: center; justify-content: center; text-align: center; border: 2px solid #f00; background: #fff; color: #f00; font: bold 16px/19px "Liberation Sans", Arial, sans-serif; }

.info { width: 279px; flex: none; display: flex; flex-direction: column; padding: 0 0 27px 5px; }
.pick { display: flex; align-items: center; gap: 2px; height: 26px; padding-top: 1px; }
.pick .select { width: 245px; height: 25px; }
.pick .select select { padding-top: 1px; }
.pick .select svg { top: 9px; }
.abtn { width: 21px; height: 21px; border: 1px solid #0b4da2; border-radius: 4px; background: #a9d334; box-shadow: inset 0 0 0 1px #dce9f5; color: #fff; font: 16px/19px "Liberation Sans", Arial, sans-serif; }
.scroller { flex: 1; min-height: 0; display: flex; }
.cards { width: 256px; padding: 3px; background: #7b7b7b; overflow: hidden; display: flex; flex-direction: column; gap: 6px; font-family: "Liberation Sans", Arial, sans-serif; color: #1f2328; }
.card { flex: none; background: #fff; padding: 8px 18px 20px 10px; }
.card.plain { padding-bottom: 7px; }
.cap { display: flex; justify-content: space-between; align-items: flex-start; }
h3 { font-size: 22px; line-height: 26px; font-weight: 400; max-width: 170px; }
.cap p { font-size: 16px; line-height: 19px; }
.lamp { width: 22px; height: 22px; margin-top: 6px; border-radius: 50%; border: 1px solid #222; flex: none; }
.lamp.red { background: #b52020; border-color: #8a4040; }
.lamp.green { background: #80b31a; border-color: #6ba010; }
.chart { display: flex; gap: 5px; margin: 9px 3px 0 7px; box-shadow: 1px 2px 2px #888; color: #111; font-size: 11px; }
.cap + .chart { margin-top: 7px; }
.axis { width: 17px; flex: none; background: #d4d4d4; display: flex; align-items: center; justify-content: center; }
.axis span { writing-mode: vertical-rl; transform: rotate(180deg); font-size: 12px; line-height: 17px; white-space: nowrap; }
.axis small { font-size: 9px; margin-top: 2px; }
.box { flex: 1; height: 165px; background: #b52020; color: #fff; position: relative; text-align: center; }
.big { display: block; font-size: 158px; line-height: 165px; text-shadow: 0 0 2px #555; }
.val { position: absolute; right: 19px; bottom: 4px; font-size: 16px; text-shadow: 1px 1px 2px #400; }
.bars { flex: 1; padding-bottom: 1px; }
.row { position: relative; height: 20px; line-height: 20px; }
.row i { position: absolute; left: 0; top: 0; bottom: 0; }
.row:last-child .scale { bottom: -1px; }
.row span { position: relative; padding-left: 6px; }
.gray { background: #d4d4d4; }
.blue { background: #3d83b8; }
.scale { background: linear-gradient(90deg, #5a9600, #a9d334 25%, #ffd731 50%, #e88a2d 75%, #b52020); }
.steps { flex: 1; height: 22px; display: flex; gap: 3px; padding-right: 3px; }
.steps b { flex: 0 1 0; background: #b52020; color: #fff; text-align: right; line-height: 22px; font-size: 11px; min-width: 0; }
.vscroll { flex: 1; display: flex; flex-direction: column; align-items: center; background: #fcfcfc; padding: 6px 0 5px; }
.thumb { flex: 0 1 843px; margin: 8px 0 auto; width: 11px; border-radius: 6px; background: #8a8a8a; }
</style>
